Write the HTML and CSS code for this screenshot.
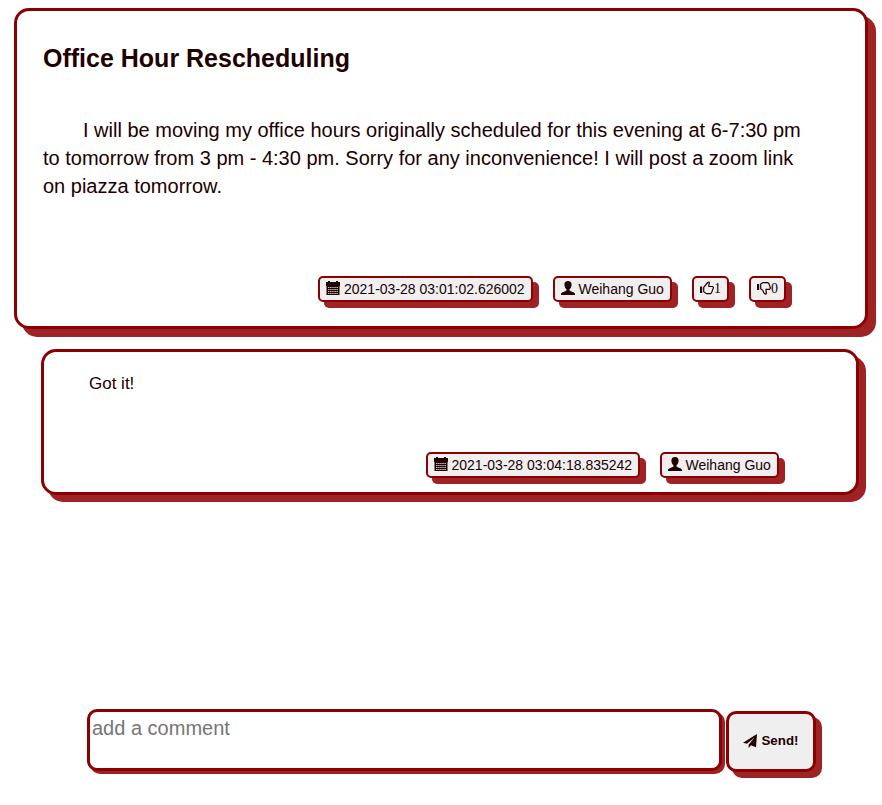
FILE: index.html
```html
<!DOCTYPE html>
<html lang="en">
<head>
<meta charset="utf-8">
<title>Office Hour Rescheduling</title>
<link rel="stylesheet" href="styles.css">
</head>
<body>
<svg class="defs" width="0" height="0">
  <symbol id="calendar" viewBox="0 0 14 14"><path d="M0 1h2V0h2v1h6V0h2v1h2v4H0zM.5 5h13v9H.5z"/><path class="cells" d="M2 6.500h10M2 8.500h10M2 10.500h10M2 12.500h10"/></symbol>
  <symbol id="user" viewBox="0 0 14 14"><path d="M7 0C4.700 0 3.400 1.300 3.400 3.400c0 1.900.8 3.800 2.100 4.800v1.200C4.500 10.400.3 11 0 12.800V14h14v-1.200c-.3-1.800-4.500-2.400-5.500-3.400V8.200c1.300-1 2.100-2.900 2.100-4.800C10.600 1.300 9.300 0 7 0z"/></symbol>
  <symbol id="up" viewBox="0 0 14 14"><path d="M0 5.500h2.200v6.500H0z"/><path class="line" d="M3.700 6.300 7.700 1.500 9 1l.3.800-.6 3.700h4l.8 1.100-.9 2.300-.9 2.500-1 1.200H6.200l-2.500-2z"/></symbol>
  <symbol id="down" viewBox="0 0 14 14"><path d="M0 3h2.200v6H0z"/><path class="line" d="M3.700 3 6 1.600h4.500l1.300.7 1.600 4.700-.7 1.300H8.900l.5 4.400-1 .5-1.500-1.300-1.100-2.500-2.100-1.700z"/></symbol>
  <symbol id="send" viewBox="0 0 14 14"><path d="M14 0 0 8.800l4 1L11.700 3.200 5.600 10.700V14l2.400-2.800 5 2z"/></symbol>
</svg>
<article class="card post">
  <h1>Office Hour Rescheduling</h1>
  <p>I will be moving my office hours originally scheduled for this evening at 6-7:30 pm to tomorrow from 3 pm - 4:30 pm. Sorry for any inconvenience! I will post a zoom link on piazza tomorrow.</p>
  <div class="meta">
    <span class="badge date"><svg><use href="#calendar"/></svg>2021-03-28 03:01:02.626002</span>
    <span class="badge author"><svg><use href="#user"/></svg>Weihang Guo</span>
    <span class="badge vote"><svg><use href="#up"/></svg>1</span>
    <span class="badge vote"><svg><use href="#down"/></svg>0</span>
  </div>
</article>
<article class="card reply">
  <p>Got it!</p>
  <div class="meta">
    <span class="badge date"><svg><use href="#calendar"/></svg>2021-03-28 03:04:18.835242</span>
    <span class="badge author"><svg><use href="#user"/></svg>Weihang Guo</span>
  </div>
</article>
<form class="composer">
  <textarea placeholder="add a comment"></textarea>
  <button type="button"><svg><use href="#send"/></svg>Send!</button>
</form>
</body>
</html>
```
FILE: styles.css
```css
* { box-sizing: border-box; }
body {
  margin: 0;
  padding: 8px 14px 0;
  height: 805px;
  overflow: hidden;
  background: #fff;
  color: #200000;
  font-family: "Liberation Sans", Arial, sans-serif;
}
.defs { position: absolute; }
.card {
  display: flex;
  flex-direction: column;
  justify-content: space-between;
  border: 3px solid darkred;
  border-radius: 15px;
  background: #fff;
}
.post {
  width: 854px;
  height: 321px;
  padding: 33px 60px 24px 26px;
  box-shadow: 8px 8px #9f2225;
}
h1 { margin: 0; font-size: 25px; line-height: 28px; }
p { margin: 0; }
.post p { margin: 44px 0 auto; font-size: 20px; line-height: 28px; text-indent: 40px; }
.reply {
  width: 818px;
  height: 146px;
  margin: 20px 0 0 27px;
  padding: 20px 77px 14px 45px;
  box-shadow: 7px 7px #9f2225;
}
.reply p { font-size: 17px; line-height: 24px; }
.meta { display: flex; justify-content: flex-end; gap: 20px; }
.post .meta { margin-right: 19px; }
.badge {
  display: flex;
  align-items: center;
  height: 26px;
  padding: 0 6px;
  border: 2px solid darkred;
  border-radius: 5px;
  background: #efefef;
  box-shadow: 6px 6px #9f2225;
  font-size: 14px;
  line-height: 20px;
  white-space: nowrap;
}
.badge svg, button svg { width: 14px; height: 14px; flex: none; fill: #200000; }
.badge svg { margin: 0 4px 2px 0; }
.date { width: 215px; }
.reply .date { width: 214px; padding-left: 5.500px; }
.author { width: 119px; padding-left: 5.500px; }
.vote { width: 37px; font-family: "Liberation Serif", serif; }
.badge.vote svg { margin-right: 0; }
.cells { stroke: #efefef; stroke-width: .8; stroke-dasharray: 1.500 .6; }
.line { fill: none; stroke: #200000; stroke-width: 1.200; stroke-linejoin: round; }
.composer { display: flex; gap: 4px; margin: 214px 0 0 73px; }
textarea {
  width: 635px;
  height: 62px;
  padding: 2px;
  border: 3px solid darkred;
  border-radius: 10px;
  background: #fff;
  box-shadow: 3px 3px #9f2225;
  font: 20px/28px "Liberation Sans", Arial, sans-serif;
  resize: none;
}
textarea::placeholder { color: #757575; }
button {
  display: flex;
  align-items: center;
  justify-content: center;
  gap: 4px;
  width: 90px;
  height: 61px;
  margin-top: 2px;
  padding: 0 0 2px;
  border: 3px solid darkred;
  border-radius: 10px;
  background: #efefef;
  box-shadow: 6px 6px #9f2225;
  color: #200000;
  font: bold 13.333px "Liberation Sans", Arial, sans-serif;
}
```
